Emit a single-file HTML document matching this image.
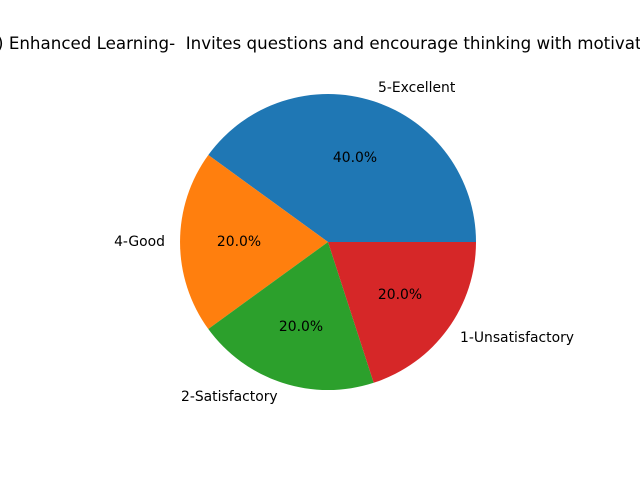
<!DOCTYPE html>
<html><head><style>html,body{margin:0;padding:0;background:#fff;width:640px;height:480px;overflow:hidden}</style></head>
<body>
<svg width="640" height="480" viewBox="0 0 640 480" xmlns="http://www.w3.org/2000/svg" font-family="DejaVu Sans, Liberation Sans, sans-serif">
<rect width="640" height="480" fill="#fff"/>
<path d="M328,242 L476,242 A148,148 0 0,0 208.3,155 Z" fill="#1f77b4"/>
<path d="M328,242 L208.3,155 A148,148 0 0,0 208.3,329 Z" fill="#ff7f0e"/>
<path d="M328,242 L208.3,329 A148,148 0 0,0 373.7,382.8 Z" fill="#2ca02c"/>
<path d="M328,242 L373.7,382.8 A148,148 0 0,0 476,242 Z" fill="#d62728"/>
<text x="-3" y="49" font-size="16.7" xml:space="preserve">) Enhanced Learning-  Invites questions and encourage thinking with motivation</text>
<g font-size="13.9" fill="#000">
<text x="378" y="92">5-Excellent</text>
<text x="165" y="246" text-anchor="end">4-Good</text>
<text x="181" y="401">2-Satisfactory</text>
<text x="460" y="342">1-Unsatisfactory</text>
<text x="355" y="162" text-anchor="middle">40.0%</text>
<text x="239" y="246" text-anchor="middle">20.0%</text>
<text x="301" y="331" text-anchor="middle">20.0%</text>
<text x="400" y="299" text-anchor="middle">20.0%</text>
</g>
</svg>
</body></html>
